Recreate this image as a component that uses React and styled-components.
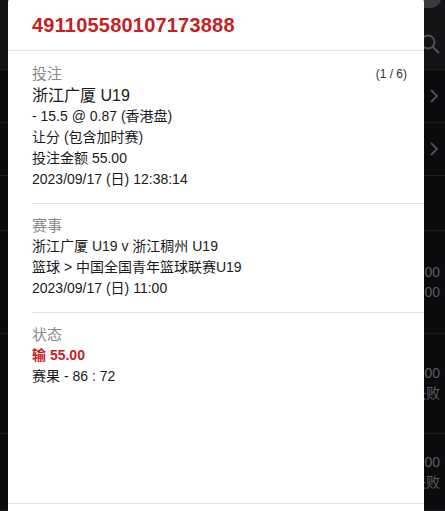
import React from "react";
import styled, { createGlobalStyle } from "styled-components";

const GlobalStyle = createGlobalStyle`
  html, body {
    margin: 0;
    padding: 0;
    background: #0b0b0e;
    overflow: hidden;
    font-family: "Liberation Sans", Arial, "Noto Sans CJK SC", sans-serif;
  }
  * { box-sizing: border-box; }
`;

const Page = styled.div`
  width: 445px;
  height: 511px;
  display: flex;
  flex-direction: column;
  background: #0b0b0e;
`;

const Header = styled.header`
  height: 72px;
  background: #131315;
  border-bottom: 1px solid #1d1d21;
  display: flex;
  flex-direction: column;
  align-items: flex-end;
  justify-content: space-between;
  padding: 0 4px 14px 0;
`;

const TopDot = styled.div`
  width: 26px;
  height: 10px;
  margin-top: -2px;
  border-radius: 0 0 13px 13px;
  background: #3a3a3e;
`;

const Row = styled.div`
  height: ${(p) => p.$h}px;
  border-bottom: 1px solid #1d1d21;
  display: flex;
  justify-content: flex-end;
  align-items: center;
  padding: 0 5px 0 14px;
  color: #5c5c62;
  font-size: 14px;
`;

const Values = styled.div`
  display: flex;
  flex-direction: column;
  align-items: flex-end;
  gap: 4px;
  line-height: 16px;
`;

const Chevron = () => (
  <svg width="12" height="16" viewBox="0 0 12 16" fill="none">
    <path d="M3 2l6 6-6 6" stroke="#4f4f55" strokeWidth="2" />
  </svg>
);

const SearchIcon = () => (
  <svg width="22" height="22" viewBox="0 0 22 22" fill="none">
    <circle cx="9" cy="9" r="6.5" stroke="#4f4f55" strokeWidth="2" />
    <path d="M14 14l6 6" stroke="#4f4f55" strokeWidth="2.2" />
  </svg>
);

const Modal = styled.div`
  position: fixed;
  left: 8px;
  width: 416px;
  top: -8px;
  bottom: -20px;
  background: #ffffff;
  border-radius: 10px 10px 0 0;
  display: flex;
  flex-direction: column;
`;

const TitleBar = styled.div`
  padding: 23px 24px 14px;
  border-bottom: 1px solid #e4e4e4;
`;

const Title = styled.div`
  color: #c4221f;
  font-weight: bold;
  font-size: 20px;
  line-height: 21px;
  letter-spacing: 0.2px;
`;

const Section = styled.section`
  margin-left: 24px;
  padding: 11px 17px 13px 0;
  border-bottom: ${(p) => (p.$last ? "none" : "1px solid #e4e4e4")};
`;

const LabelRow = styled.div`
  display: flex;
  justify-content: space-between;
  align-items: center;
  line-height: 21px;
`;

const Label = styled.div`
  color: #8a8a8a;
  font-size: 15px;
`;

const Counter = styled.div`
  color: #333;
  font-size: 12px;
  margin-top: 2px;
`;

const Line = styled.div`
  color: ${(p) => (p.$red ? "#c4221f" : "#1a1a1a")};
  font-size: ${(p) => (p.$big ? 16 : 14)}px;
  font-weight: ${(p) => (p.$red ? "bold" : "normal")};
  line-height: 21px;
  white-space: nowrap;
`;

const Spacer = styled.div`
  flex: 1;
`;

const Footer = styled.div`
  height: 28px;
  border-top: 1px solid #e4e4e4;
`;

export default function App() {
  return (
    <>
      <GlobalStyle />
      <Page>
        <Header>
          <TopDot />
          <SearchIcon />
        </Header>
        <Row $h={55}>
          <Chevron />
        </Row>
        <Row $h={54}>
          <Chevron />
        </Row>
        <Row $h={57} />
        <Row $h={107}>
          <Values>
            <span>0.00</span>
            <span>0.00</span>
          </Values>
        </Row>
        <Row $h={103}>
          <Values>
            <span>0.00</span>
            <span>失败</span>
          </Values>
        </Row>
        <Row $h={80}>
          <Values>
            <span>0.00</span>
            <span>失败</span>
          </Values>
        </Row>
      </Page>
      <Modal>
        <TitleBar>
          <Title>491105580107173888</Title>
        </TitleBar>
        <Section>
          <LabelRow>
            <Label>投注</Label>
            <Counter>(1 / 6)</Counter>
          </LabelRow>
          <Line $big>浙江广厦 U19</Line>
          <Line>- 15.5 @ 0.87 (香港盘)</Line>
          <Line>让分 (包含加时赛)</Line>
          <Line>投注金额 55.00</Line>
          <Line>2023/09/17 (日) 12:38:14</Line>
        </Section>
        <Section>
          <LabelRow>
            <Label>赛事</Label>
          </LabelRow>
          <Line>浙江广厦 U19 v 浙江稠州 U19</Line>
          <Line>篮球 &gt; 中国全国青年篮球联赛U19</Line>
          <Line>2023/09/17 (日) 11:00</Line>
        </Section>
        <Section $last>
          <LabelRow>
            <Label>状态</Label>
          </LabelRow>
          <Line $red>输 55.00</Line>
          <Line>赛果 - 86 : 72</Line>
        </Section>
        <Spacer />
        <Footer />
      </Modal>
    </>
  );
}
